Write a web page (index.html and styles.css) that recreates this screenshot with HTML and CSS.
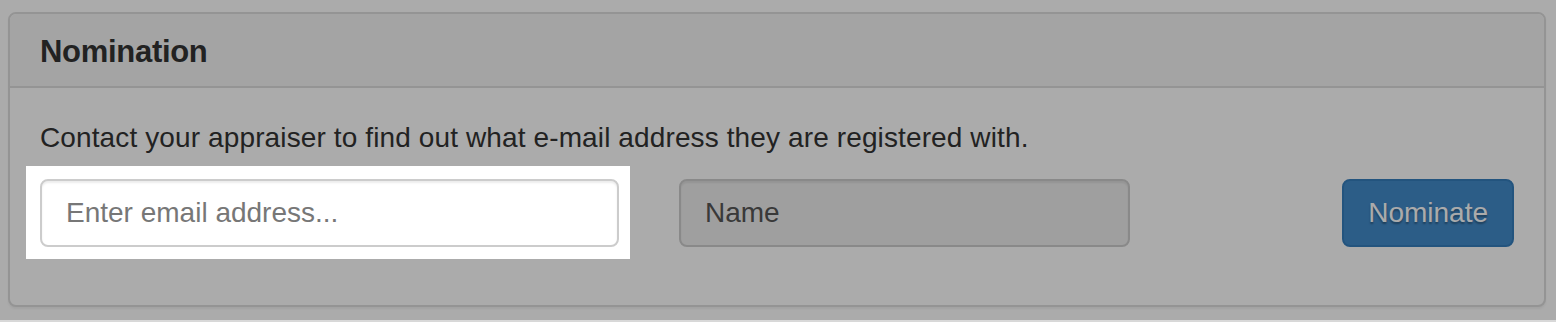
FILE: index.html
```
<!DOCTYPE html>
<html lang="en">
<head>
    <meta charset="UTF-8">
    <meta name="viewport" content="width=device-width, initial-scale=1.0">
    <title>Nomination</title>
    <link rel="stylesheet" href="styles.css">
</head>
<body>

<div class="page">
    <div class="panel">
        <div class="panel-heading">
            <h3 class="panel-title">Nomination</h3>
        </div>
        <div class="panel-body">
            <p class="hint">Contact your appraiser to find out what e-mail address they are registered with.</p>
            <div class="form-row">
                <div class="field tour-target">
                    <span class="tour-helper"></span>
                    <input type="email" class="form-control" placeholder="Enter email address...">
                </div>
                <div class="field">
                    <input type="text" class="form-control" value="Name" readonly>
                </div>
                <div class="field actions">
                    <button class="btn btn-primary">Nominate</button>
                </div>
            </div>
        </div>
    </div>

    <!-- tour overlay, dims everything but the highlighted field -->
    <div class="tour-overlay"></div>
</div>

</body>
</html>
```

FILE: styles.css
```
html {
    background-color: #d8d8d8;
}

body {
    font-family: "Liberation Sans", Arial, sans-serif;
    font-size: 28px;
    line-height: 40px;
    color: #333;
    margin: 0;
}

.page {
    position: relative;
    height: 320px;
    background-color: #fff;
    padding: 12px 10px 0 8px;
    box-sizing: border-box;
}

.panel {
    background-color: #fff;
    border: 2px solid #ddd;
    border-radius: 8px;
    box-shadow: 0 2px 2px rgba(0, 0, 0, 0.05);
}

.panel-heading {
    padding: 21px 30px 17px 30px;
    background-color: #f5f5f5;
    border-bottom: 2px solid #ddd;
    border-radius: 6px 6px 0 0;
}

.panel-title {
    margin: 0;
    font-size: 31px;
    line-height: 34px;
    font-weight: 700;
    letter-spacing: -0.3px;
    color: #333;
}

.panel-body {
    padding: 30px 30px 30px 30px;
}

.hint {
    margin: 0 0 21px 0;
    letter-spacing: 0.12px;
}

.form-row {
    display: grid;
    grid-template-columns: 579px 451px 1fr;
    gap: 60px;
    margin-bottom: 28px;
}

.field {
    position: relative;
}

.actions {
    display: flex;
    justify-content: flex-end;
}

.form-control {
    display: block;
    width: 100%;
    height: 68px;
    padding: 12px 24px;
    font-family: inherit;
    font-size: 28px;
    color: #555;
    background-color: #fff;
    border: 2px solid #ccc;
    border-radius: 8px;
    box-shadow: inset 0 2px 2px rgba(0, 0, 0, 0.075);
    box-sizing: border-box;
    outline: none;
}

.form-control::placeholder {
    color: #777;
}

.form-control[readonly] {
    background-color: #eee;
}

.btn {
    height: 68px;
    padding: 12px 24px;
    font-family: inherit;
    font-size: 28px;
    border-radius: 8px;
    cursor: pointer;
}

.btn-primary {
    color: #fff;
    background-color: #428bca;
    border: 2px solid #357ebd;
    text-shadow: 0 2px 2px rgba(0, 0, 0, 0.35);
}

.tour-overlay {
    position: absolute;
    top: 0;
    left: 0;
    right: 0;
    bottom: 0;
    background-color: rgba(0, 0, 0, 0.33);
    z-index: 10;
}

.tour-helper {
    position: absolute;
    top: -13px;
    left: -14px;
    right: -11px;
    bottom: -12px;
    background-color: #fff;
    z-index: 11;
}

.tour-target .form-control {
    position: relative;
    z-index: 12;
}
```
